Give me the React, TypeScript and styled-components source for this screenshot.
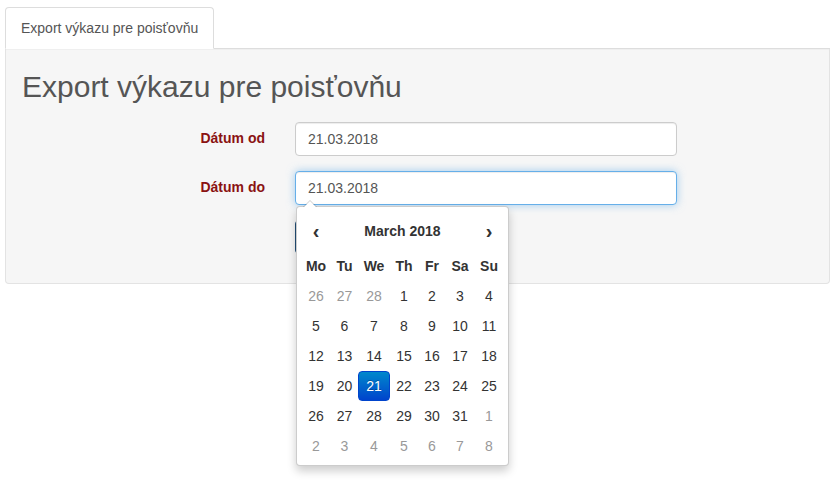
import React from 'react';
import styled, {createGlobalStyle, css} from "styled-components";

const GlobalStyle = createGlobalStyle`
  html, body, #root {
    margin: 0;
    padding: 0;
    min-height: 100vh;
    background: #fff;
  }
  body {
    font-family: "Liberation Sans", Arial, sans-serif;
    font-size: 14px;
    line-height: 1.42857;
    color: #333;
  }
  * {
    box-sizing: border-box;
  }
`

type Day = { day: number, muted?: boolean, active?: boolean }

const weekDays = ['Mo', 'Tu', 'We', 'Th', 'Fr', 'Sa', 'Su']

const buildDays = (): Day[] => {
    const days: Day[] = [26, 27, 28].map(d => ({day: d, muted: true}))
    for (let d = 1; d <= 31; d++) days.push({day: d, active: d === 21})
    for (let d = 1; d <= 8; d++) days.push({day: d, muted: true})
    return days
}

export default function App() {
    const title = 'Export výkazu pre poisťovňu'
    const days = buildDays()
    return (
        <>
            <GlobalStyle/>
            <Page>
                <Tabs>
                    <Tab>{title}</Tab>
                </Tabs>
                <Well>
                    <Heading>{title}</Heading>
                    <Form>
                        <FormRow>
                            <Label>Dátum od</Label>
                            <InputBox>
                                <Input defaultValue='21.03.2018'/>
                            </InputBox>
                        </FormRow>
                        <FormRow>
                            <Label>Dátum do</Label>
                            <InputBox>
                                <Input defaultValue='21.03.2018' focused/>
                                <Picker>
                                    <Calendar>
                                        <NavCell>‹</NavCell>
                                        <MonthTitle>March 2018</MonthTitle>
                                        <NavCell>›</NavCell>
                                        {weekDays.map(w => <WeekDay key={w}>{w}</WeekDay>)}
                                        {days.map((d, i) => (
                                            <DayCell key={i} muted={d.muted} active={d.active}>{d.day}</DayCell>
                                        ))}
                                    </Calendar>
                                </Picker>
                            </InputBox>
                        </FormRow>
                        <FormRow>
                            <span/>
                            <div>
                                <PrimaryButton type='button'>Exportovať</PrimaryButton>
                            </div>
                        </FormRow>
                    </Form>
                </Well>
            </Page>
        </>
    )
}

const Page = styled.div`
  padding: 7px 9px 0 5px;
`

const Tabs = styled.div`
  display: flex;
  border-bottom: 1px solid #ddd;
`

const Tab = styled.div`
  padding: 10px 15px;
  line-height: 20px;
  color: #555;
  background: #fff;
  border: 1px solid #ddd;
  border-bottom-color: transparent;
  border-radius: 4px 4px 0 0;
  margin-bottom: -1px;
`

const Well = styled.div`
  background: #f6f6f6;
  border: 1px solid #e3e3e3;
  border-top: none;
  border-radius: 0 0 4px 4px;
  box-shadow: inset 0 1px 1px rgba(0, 0, 0, .03);
  padding: 21px 14px 14px 16px;
`

const Heading = styled.h2`
  margin: 0;
  font-size: 30px;
  font-weight: 500;
  line-height: 33px;
  color: #555;
`

const Form = styled.form`
  margin-top: 19px;
`

const FormRow = styled.div`
  display: grid;
  grid-template-columns: 243px 382px;
  column-gap: 30px;
  align-items: center;
  margin-bottom: 15px;
`

const Label = styled.label`
  text-align: right;
  font-weight: bold;
  color: #8a1212;
`

const InputBox = styled.div`
  position: relative;
`

const Input = styled.input<{ focused?: boolean }>`
  display: block;
  width: 100%;
  height: 34px;
  padding: 6px 12px;
  font-family: inherit;
  font-size: 14px;
  color: #555;
  background: #fff;
  border: 1px solid #ccc;
  border-radius: 4px;
  box-shadow: inset 0 1px 1px rgba(0, 0, 0, .075);
  outline: none;
  ${p => p.focused && css`
    border-color: #66afe9;
    box-shadow: inset 0 1px 1px rgba(0, 0, 0, .075), 0 0 8px rgba(102, 175, 233, .6);
  `}
`

const PrimaryButton = styled.button`
  height: 34px;
  padding: 6px 12px;
  font-family: inherit;
  font-size: 14px;
  color: #fff;
  background: #2a5f8f;
  border: 1px solid #214d75;
  border-radius: 4px;
`

const Picker = styled.div`
  position: absolute;
  top: calc(100% + 1px);
  left: 1px;
  z-index: 10;
  width: 213px;
  padding: 4px;
  background: #fff;
  border: 1px solid rgba(0, 0, 0, .2);
  border-radius: 4px;
  box-shadow: 0 5px 10px rgba(0, 0, 0, .2);

  &::before, &::after {
    content: '';
    position: absolute;
    border-left: 7px solid transparent;
    border-right: 7px solid transparent;
  }

  &::before {
    left: 6px;
    top: -7px;
    border-bottom: 7px solid rgba(0, 0, 0, .2);
  }

  &::after {
    left: 7px;
    top: -6px;
    border-left-width: 6px;
    border-right-width: 6px;
    border-bottom: 6px solid #fff;
  }
`

const Calendar = styled.div`
  display: grid;
  grid-template-columns: 30px 27px 32px 28px 28px 28px 30px;
  grid-template-rows: 40px 30px;
  grid-auto-rows: 30px;
  text-align: center;
`

const NavCell = styled.div`
  line-height: 40px;
  font-size: 20px;
  font-weight: bold;
  color: #333;
`

const MonthTitle = styled.div`
  grid-column: span 5;
  line-height: 40px;
  font-weight: bold;
`

const WeekDay = styled.div`
  line-height: 30px;
  font-weight: bold;
`

const DayCell = styled.div<{ muted?: boolean, active?: boolean }>`
  line-height: 30px;
  border-radius: 4px;
  color: ${p => p.muted ? '#999' : '#333'};
  ${p => p.active && css`
    color: #fff;
    background: linear-gradient(to bottom, #0088cc, #0044cc);
    border: 1px solid #0044cc;
    line-height: 28px;
    text-shadow: 0 -1px 0 rgba(0, 0, 0, .25);
  `}
`
